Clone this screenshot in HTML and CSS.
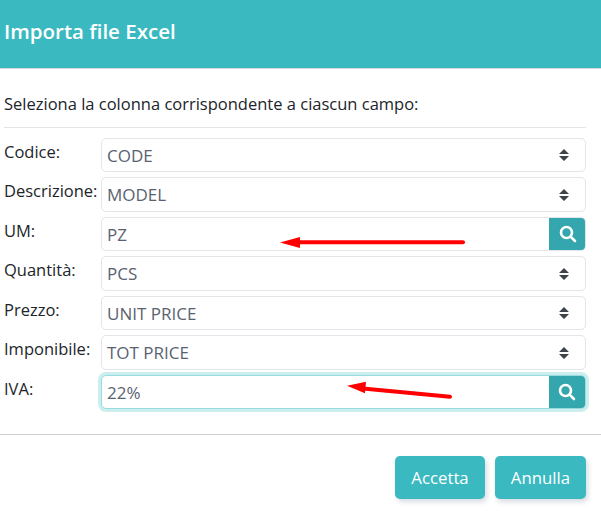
FILE: index.html
```html
<!DOCTYPE html>
<html lang="it">
<head>
<meta charset="utf-8">
<title>Importa file Excel</title>
<link rel="stylesheet" href="styles.css">
</head>
<body>
<div class="dialog">
  <header class="head"><h1 class="title">Importa file Excel</h1></header>
  <main class="content">
    <p class="intro">Seleziona la colonna corrispondente a ciascun campo:</p>
    <hr class="sep">
    <div class="form">
      <div class="row"><span class="label">Codice:</span>
        <div class="field"><span class="value">CODE</span><svg class="updown" viewBox="0 0 10 12"><path d="M5 0 10 5H0ZM0 7H10L5 12Z"/></svg></div></div>
      <div class="row"><span class="label">Descrizione:</span>
        <div class="field"><span class="value">MODEL</span><svg class="updown" viewBox="0 0 10 12"><path d="M5 0 10 5H0ZM0 7H10L5 12Z"/></svg></div></div>
      <div class="row"><span class="label">UM:</span>
        <div class="field"><span class="value">PZ</span><span class="search"><svg class="lens" viewBox="0 0 18 18"><circle cx="7.5" cy="7.5" r="5.5"/><path d="M11.8 11.8 16 16"/></svg></span></div></div>
      <div class="row"><span class="label">Quantità:</span>
        <div class="field"><span class="value">PCS</span><svg class="updown" viewBox="0 0 10 12"><path d="M5 0 10 5H0ZM0 7H10L5 12Z"/></svg></div></div>
      <div class="row"><span class="label">Prezzo:</span>
        <div class="field"><span class="value">UNIT PRICE</span><svg class="updown" viewBox="0 0 10 12"><path d="M5 0 10 5H0ZM0 7H10L5 12Z"/></svg></div></div>
      <div class="row"><span class="label">Imponibile:</span>
        <div class="field"><span class="value">TOT PRICE</span><svg class="updown" viewBox="0 0 10 12"><path d="M5 0 10 5H0ZM0 7H10L5 12Z"/></svg></div></div>
      <div class="row"><span class="label">IVA:</span>
        <div class="field focus"><span class="value">22%</span><span class="search"><svg class="lens" viewBox="0 0 18 18"><circle cx="7.5" cy="7.5" r="5.5"/><path d="M11.8 11.8 16 16"/></svg></span></div></div>
    </div>
  </main>
  <footer class="foot">
    <button class="btn accept" type="button">Accetta</button>
    <button class="btn cancel" type="button">Annulla</button>
  </footer>
  <svg class="arrows" viewBox="0 0 601 511">
    <path class="shaft" d="M298 242.3H463"/>
    <path class="head-a" d="M280 242.5 300 237V248Z"/>
    <path class="shaft" d="M363 388.5 450 396.7"/>
    <path class="head-a" d="M347 385.7 366 381.7 365 393.3Z"/>
  </svg>
</div>
</body>
</html>
```
FILE: styles.css
```css
* { box-sizing: border-box; }
html, body { margin: 0; background: #fff; }
body {
  font-family: "Open Sans", "Liberation Sans", sans-serif;
  font-size: 16.5px;
  color: #212529;
  overflow: hidden;
}
.dialog { position: relative; width: 601px; height: 511px; }
.head {
  height: 69px;
  background: #3ab9c1;
  border-bottom: 1px solid #d5d9dd;
  padding: 18px 4px 0;
}
.title { margin: 0; font-size: 20.5px; line-height: 26px; font-weight: 600; color: #fff; }
.content { padding: 24px 15px 0 4px; }
.intro { margin: 0; height: 22px; line-height: 22px; }
.sep { margin: 12px 0 9.8px; border: 0; border-top: 1px solid #e2e4e6; }
.form { display: flex; flex-direction: column; gap: 5px; }
.row { display: flex; height: 34.5px; }
.label { width: 97px; flex: none; line-height: 28px; white-space: nowrap; }
.field {
  flex: 1;
  display: flex;
  align-items: center;
  justify-content: space-between;
  padding: 0 0 0 5px;
  border: 1px solid #e3e5e8;
  border-radius: 5px;
  background: #fff;
  overflow: hidden;
}
.value { color: #5a6270; font-size: 17px; }
.updown { width: 10px; height: 12px; margin-right: 16px; fill: #3f444a; }
.search {
  width: 37px;
  align-self: stretch;
  margin: -1px -1px -1px 0;
  background: #34a6ad;
  display: flex;
  align-items: center;
  justify-content: center;
}
.lens { width: 18px; height: 18px; fill: none; stroke: #fff; stroke-width: 2.6; stroke-linecap: round; }
.field.focus { border-color: #97dcdf; box-shadow: 0 0 0 3px #cdeeef; overflow: visible; }
.field.focus .search { width: 36px; margin: 0; border-radius: 0 4px 4px 0; }
.foot {
  margin-top: 25px;
  border-top: 1px solid #ced1d6;
  padding: 21px 15px 0 0;
  display: flex;
  justify-content: flex-end;
  gap: 10px;
}
.btn {
  height: 43px;
  border: 0;
  border-radius: 5px;
  background: #3ab9c1;
  color: #fff;
  font: inherit;
  font-size: 16.8px;
  box-shadow: 2px 3px 5px rgba(60, 80, 110, .2);
}
.accept { width: 90px; }
.cancel { width: 91px; }
.arrows { position: absolute; left: 0; top: 0; width: 601px; height: 511px; pointer-events: none; }
.shaft { fill: none; stroke: #f00; stroke-width: 4; stroke-linecap: round; }
.head-a { fill: #f00; }
```
